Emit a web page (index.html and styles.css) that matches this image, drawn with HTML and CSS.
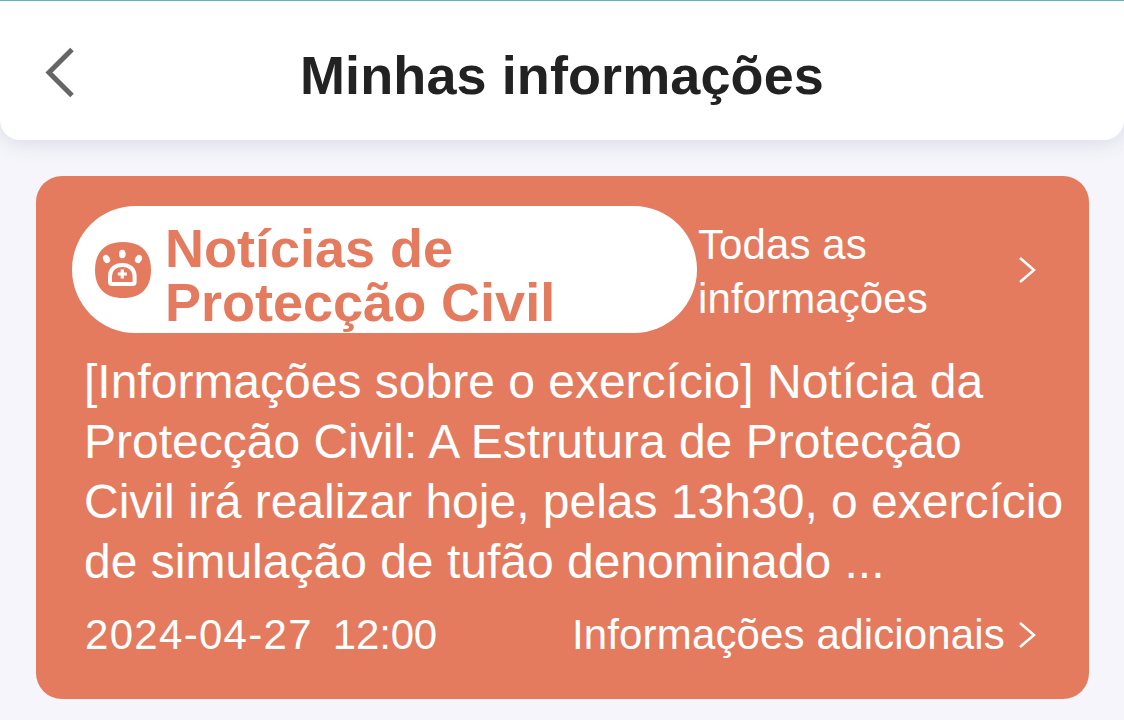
FILE: index.html
```html
<!DOCTYPE html>
<html lang="pt">
<head>
<meta charset="utf-8">
<title>Minhas informações</title>
<link rel="stylesheet" href="styles.css">
</head>
<body>
<div class="page">
  <header class="topbar">
    <svg class="back" width="30" height="52" viewBox="0 0 30 52" aria-hidden="true"><path d="M27 2.500 L4 25.500 L27 48.500" fill="none" stroke="#666" stroke-width="5"/></svg>
    <h1 class="title">Minhas informações</h1>
  </header>
  <section class="card">
    <div class="card-head">
      <div class="pill">
        <svg class="badge" width="58" height="58" viewBox="0 0 58 58" aria-hidden="true">
          <path d="M29 1 C47 1 57 11 57 29 C57 47 47 57 29 57 C11 57 1 47 1 29 C1 11 11 1 29 1 Z" fill="#e47b5f"/>
          <ellipse cx="12.500" cy="18" rx="3.300" ry="4.300" transform="rotate(-28 12.500 18)" fill="#fff"/>
          <ellipse cx="28.300" cy="13" rx="3.300" ry="4.300" fill="#fff"/>
          <ellipse cx="44.500" cy="18" rx="3.300" ry="4.300" transform="rotate(28 44.500 18)" fill="#fff"/>
          <path d="M18 43 H38.600 Q40.600 43 40.600 41 V35 C40.600 28 35.300 24 28.300 24 C21.300 24 16 28 16 35 V41 Q16 43 18 43 Z" fill="none" stroke="#fff" stroke-width="4" stroke-linejoin="round"/>
          <path d="M28.300 28.500 V37.500 M23.800 33 H32.800" stroke="#fff" stroke-width="3.200"/>
        </svg>
        <h2 class="pill-title">Notícias de Protecção Civil</h2>
      </div>
      <a class="all-link">
        <span class="all-text">Todas as informações</span>
        <svg class="chev-a" width="18" height="28" viewBox="0 0 18 28" aria-hidden="true"><path d="M2 2 L16 14 L2 26" fill="none" stroke="#fff" stroke-width="2.500"/></svg>
      </a>
    </div>
    <p class="message">[Informações sobre o exercício] Notícia da Protecção Civil: A Estrutura de Protecção Civil irá realizar hoje, pelas 13h30, o exercício de simulação de tufão denominado ...</p>
    <div class="card-foot">
      <div class="stamp"><time class="date">2024-04-27</time><time class="hour">12:00</time></div>
      <a class="more">Informações adicionais
        <svg class="chev-b" width="18" height="28" viewBox="0 0 18 28" aria-hidden="true"><path d="M2 2 L16 14 L2 26" fill="none" stroke="#fff" stroke-width="2.500"/></svg>
      </a>
    </div>
  </section>
</div>
</body>
</html>
```
FILE: styles.css
```css
* { box-sizing: border-box; }
html, body { margin: 0; padding: 0; }
body {
  width: 1124px;
  height: 720px;
  overflow: hidden;
  background: #f5f5fb;
  font-family: "Liberation Sans", Arial, sans-serif;
}
.page { display: flex; flex-direction: column; }
.topbar {
  height: 140px;
  background: #fff;
  border-top: 1px solid #66b3b5;
  border-radius: 0 0 20px 20px;
  box-shadow: 0 2px 22px rgba(70, 70, 110, 0.16);
  display: flex;
  align-items: center;
  justify-content: center;
  position: relative;
  margin-bottom: 36px;
  padding-top: 8px;
}
.back { position: absolute; left: 45px; top: 46px; }
.title { margin: 0; font-size: 54px; font-weight: 700; color: #222; line-height: 1; letter-spacing: 0.1px; }
.card {
  width: 1053px;
  height: 523px;
  margin-left: 36px;
  background: #e47b5f;
  border-radius: 26px;
  padding: 30px 36px 0;
  color: #fff;
}
.card-head { display: flex; height: 127px; }
.pill {
  width: 625px;
  height: 127px;
  background: #fff;
  border-radius: 64px;
  display: flex;
  align-items: center;
  padding-left: 22px;
  gap: 13px;
}
.pill-title {
  margin: 10px 0 0;
  font-size: 54px;
  line-height: 54px;
  font-weight: 700;
  color: #e47b5f;
  width: 420px;
}
.all-link { display: flex; align-items: center; width: 340px; justify-content: space-between; }
.all-text { font-size: 42px; line-height: 54px; width: 260px; margin: 4px 0 0 1px; letter-spacing: 0.1px; }
.chev-a { margin-right: 1px; }
.message {
  margin: 19px 0 0 12px;
  font-size: 48px;
  line-height: 60px;
  width: 980px;
}
.card-foot { display: flex; justify-content: space-between; align-items: center; margin: 19px 0 0 12px; width: 952px; }
.stamp { font-size: 42px; display: flex; gap: 20px; margin-left: 1px; }
.date { letter-spacing: 1.3px; }
.hour { letter-spacing: -0.2px; }
.more { font-size: 42px; display: flex; align-items: center; gap: 13px; letter-spacing: 0.16px; }
```
